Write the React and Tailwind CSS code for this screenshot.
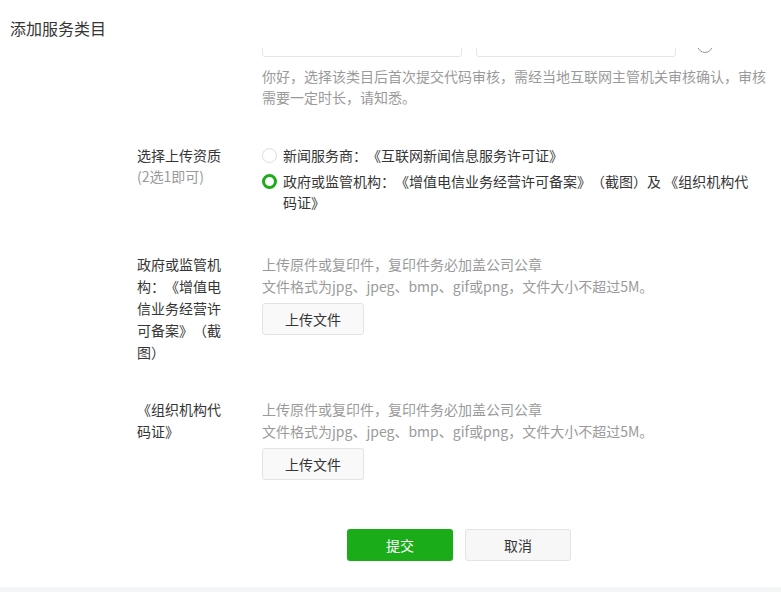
const font = { fontFamily: '"Noto Sans CJK SC", "Noto Sans", sans-serif' };

function Row({ label, children, className = "" }) {
  return (
    <div className={`flex ${className}`}>
      <div className="ml-[137px] w-[86px] shrink-0 text-[14px] leading-[22px] text-[#353535]">{label}</div>
      <div className="ml-[39px] w-[505px]">{children}</div>
    </div>
  );
}

function UploadBlock() {
  return (
    <div>
      <div className="text-[14px] leading-[22px] text-[#9a9a9a]">
        <p>上传原件或复印件，复印件务必加盖公司公章</p>
        <p>文件格式为jpg、jpeg、bmp、gif或png，文件大小不超过5M。</p>
      </div>
      <button className="mt-[6px] h-[32px] w-[102px] rounded-[3px] border border-[#e3e3e3] bg-[#f9f9f9] text-[14px] text-[#353535]">
        上传文件
      </button>
    </div>
  );
}

function Radio({ checked, children }) {
  return (
    <label className="flex items-start gap-[6px] text-[14px] leading-[21px] text-[#353535]">
      <span
        className={`mt-[3px] h-[15px] w-[15px] shrink-0 rounded-full bg-white ${
          checked ? "border-[3px] border-[#1aad19]" : "border border-[#dcdcdc]"
        }`}
      />
      <span className="w-[472px]">{children}</span>
    </label>
  );
}

export default function App() {
  return (
    <div
      className="relative h-[592px] w-[781px] overflow-hidden bg-white [text-spacing-trim:space-all]"
      style={font}
    >
      <div className="h-[48px] px-[10px] pt-[17px] text-[16px] leading-[22px] text-[#353535]">添加服务类目</div>

      <div className="flex h-[9px] items-end gap-[14px] overflow-hidden pl-[262px]">
        <div className="h-[34px] w-[200px] shrink-0 rounded-[3px] border border-[#e5e5e5]" />
        <div className="h-[34px] w-[200px] shrink-0 rounded-[3px] border border-[#e5e5e5]" />
        <div className="mb-[4px] ml-[7px] h-[16px] w-[16px] shrink-0 rounded-full border border-[#9a9a9a]" />
      </div>

      <p className="ml-[262px] mt-[9px] w-[505px] text-[14px] leading-[21px] text-[#9a9a9a]">
        你好，选择该类目后首次提交代码审核，需经当地互联网主管机关审核确认，审核需要一定时长，请知悉。
      </p>

      <div className="mt-[37px] flex">
        <div className="ml-[137px] w-[86px] shrink-0 text-[14px] leading-[21px]">
          <p className="text-[#353535]">选择上传资质</p>
          <p className="text-[#9a9a9a]">(2选1即可)</p>
        </div>
        <div className="ml-[39px] flex flex-col gap-[5px]">
          <Radio>新闻服务商：《互联网新闻信息服务许可证》</Radio>
          <Radio checked>政府或监管机构：《增值电信业务经营许可备案》（截图）及 《组织机构代码证》</Radio>
        </div>
      </div>

      <Row className="mt-[40px]" label="政府或监管机构：《增值电信业务经营许可备案》（截图）">
        <UploadBlock />
      </Row>

      <Row className="mt-[35px]" label="《组织机构代码证》">
        <UploadBlock />
      </Row>

      <div className="mt-[49px] flex gap-[12px] pl-[347px]">
        <button className="h-[32px] w-[106px] rounded-[3px] bg-[#1aad19] text-[14px] text-white">提交</button>
        <button className="h-[32px] w-[106px] rounded-[3px] border border-[#e3e3e3] bg-[#f7f7f7] text-[14px] text-[#353535]">
          取消
        </button>
      </div>

      <div className="absolute bottom-0 left-0 h-[5px] w-full bg-[#f4f5f6]" />
    </div>
  );
}
